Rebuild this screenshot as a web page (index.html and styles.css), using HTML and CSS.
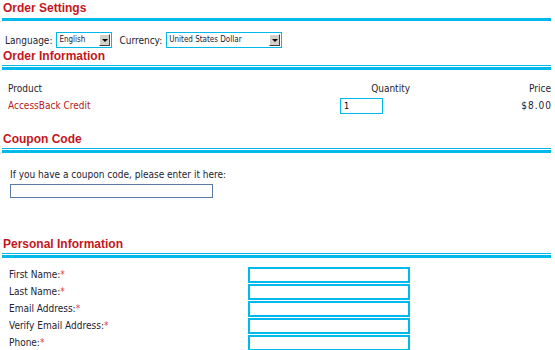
FILE: index.html
```html
<!DOCTYPE html>
<html lang="en">

<head>
    <meta charset="UTF-8">
    <title>Checkout</title>
    <link rel="stylesheet" href="styles.css">
</head>

<body>
    <div class="block">
        <h2 class="title">Order Settings</h2>
        <div class="rule-thick"></div>
        <div class="settings">
            <label>Language:</label>
            <div class="select select-lang">
                <span class="select-text">English</span>
                <span class="select-btn"><span class="arrow"></span></span>
            </div>
            <label>Currency:</label>
            <div class="select select-cur">
                <span class="select-text">United States Dollar</span>
                <span class="select-btn"><span class="arrow"></span></span>
            </div>
        </div>
    </div>

    <div class="block">
        <h2 class="title">Order Information</h2>
        <div class="rule-double"></div>
        <div class="order-table">
            <div class="th">Product</div>
            <div class="th qty-head">Quantity</div>
            <div class="th price">Price</div>
            <div class="product">AccessBack Credit</div>
            <div><input class="qty" type="text" value="1"></div>
            <div class="price amount">$8.00</div>
        </div>
    </div>

    <div class="block">
        <h2 class="title">Coupon Code</h2>
        <div class="rule-double"></div>
        <div class="coupon">
            <p>If you have a coupon code, please enter it here:</p>
            <input class="coupon-input" type="text">
        </div>
    </div>

    <div class="block">
        <h2 class="title">Personal Information</h2>
        <div class="rule-double"></div>
        <div class="personal">
            <label>First Name:<span class="req">*</span></label>
            <input class="field" type="text">
            <label>Last Name:<span class="req">*</span></label>
            <input class="field" type="text">
            <label>Email Address:<span class="req">*</span></label>
            <input class="field" type="text">
            <label>Verify Email Address:<span class="req">*</span></label>
            <input class="field" type="text">
            <label>Phone:<span class="req">*</span></label>
            <input class="field" type="text">
        </div>
    </div>
</body>

</html>
```

FILE: styles.css
```css
body {
    margin: 0 4px 0 2px;
    background: #ffffff;
    color: #222233;
    font-family: "DejaVu Sans Condensed", "DejaVu Sans", sans-serif;
    font-size: 10px;
}

.title {
    margin: 0;
    height: 17px;
    line-height: 16px;
    padding-left: 1px;
    font-family: "Liberation Sans", Arial, sans-serif;
    font-size: 12px;
    font-weight: bold;
    color: #c4161c;
}

.rule-thick {
    height: 3px;
    margin-top: 1px;
    background: #00b9ec;
}

.rule-double {
    height: 1px;
    border-top: 1px solid #00b9ec;
    border-bottom: 3px solid #00b9ec;
}

/* order settings */
.settings {
    display: flex;
    align-items: center;
    padding: 11px 0 0 3px;
    height: 16px;
}

.settings label {
    margin-right: 4px;
}

.select {
    display: flex;
    height: 14px;
    border: 1px solid #00b9ec;
    background: #fff;
    margin-right: 7px;
}

.select-lang {
    width: 54px;
}

.select-cur {
    width: 114px;
}

.select-text {
    flex: 1;
    font-size: 8px;
    line-height: 14px;
    padding-left: 2px;
}

.select-btn {
    width: 11px;
    margin: 1px 1px 1px 0;
    background: #d4d0c8;
    border-top: 1px solid #ffffff;
    border-left: 1px solid #ffffff;
    border-right: 1px solid #404040;
    border-bottom: 1px solid #404040;
    display: flex;
    align-items: center;
    justify-content: center;
    box-sizing: border-box;
}

.arrow {
    width: 0;
    height: 0;
    border-left: 3px solid transparent;
    border-right: 3px solid transparent;
    border-top: 3px solid #000;
}

/* order information */
.order-table {
    display: grid;
    grid-template-columns: 332px 70px 1fr;
    grid-auto-rows: 17px;
    align-content: start;
    align-items: center;
    padding: 10px 0 0 6px;
    height: 61px;
    box-sizing: border-box;
}

.th {
    color: #1e1e2e;
}

.qty-head {
    text-align: right;
}

.price {
    text-align: right;
}

.amount {
    letter-spacing: 1px;
    margin-right: -1px;
}

.product {
    color: #b51b22;
}

.qty {
    width: 43px;
    height: 16px;
    box-sizing: border-box;
    border: 1px solid #00b9ec;
    padding: 0 3px;
    font-family: "DejaVu Sans Condensed", sans-serif;
    font-size: 9px;
}

/* coupon */
.coupon {
    padding: 16px 0 0 8px;
    height: 83px;
    box-sizing: border-box;
}

.coupon p {
    margin: 0 0 3px 0;
    line-height: 12px;
}

.coupon-input {
    display: block;
    width: 203px;
    height: 14px;
    box-sizing: border-box;
    border: 1px solid #5a7aa4;
    padding: 0;
}

/* personal information */
.personal {
    display: grid;
    grid-template-columns: 239px 162px;
    grid-auto-rows: 17px;
    align-items: center;
    padding: 8px 0 0 7px;
}

.req {
    color: #e04040;
}

.field {
    width: 162px;
    height: 16px;
    box-sizing: border-box;
    border: 2px solid #00b9ec;
    padding: 0;
}
```
